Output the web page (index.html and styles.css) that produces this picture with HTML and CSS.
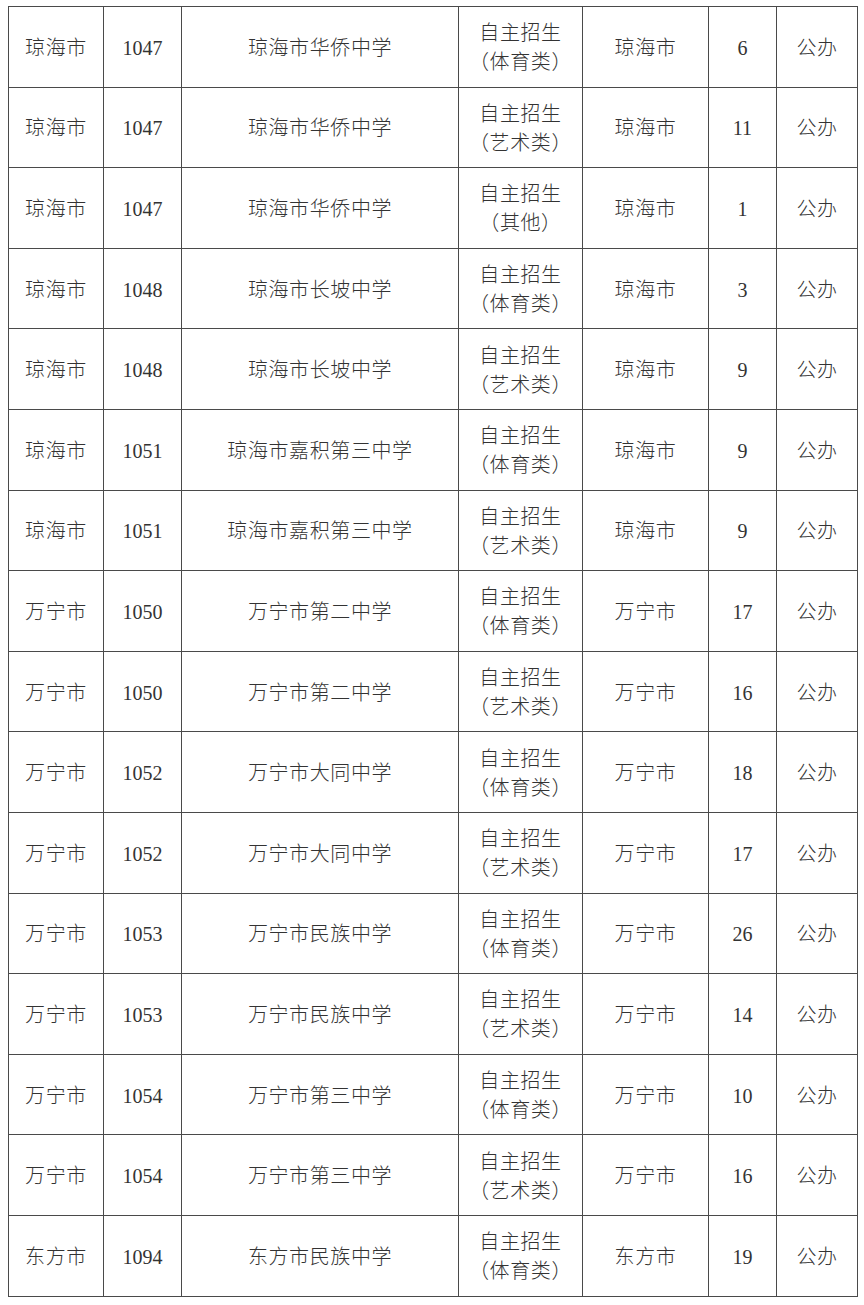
FILE: index.html
```html
<!DOCTYPE html>
<html lang="zh">
<head>
<meta charset="utf-8">
<link rel="stylesheet" href="styles.css">
</head>
<body>
<table class="tbl">
<colgroup>
<col class="c1"><col class="c2"><col class="c3"><col class="c4"><col class="c5"><col class="c6"><col class="c7">
</colgroup>
<tbody>
<tr><td>琼海市</td><td class="n">1047</td><td>琼海市华侨中学</td><td>自主招生<br>（体育类）</td><td>琼海市</td><td class="n">6</td><td>公办</td></tr>
<tr><td>琼海市</td><td class="n">1047</td><td>琼海市华侨中学</td><td>自主招生<br>（艺术类）</td><td>琼海市</td><td class="n">11</td><td>公办</td></tr>
<tr><td>琼海市</td><td class="n">1047</td><td>琼海市华侨中学</td><td>自主招生<br>（其他）</td><td>琼海市</td><td class="n">1</td><td>公办</td></tr>
<tr><td>琼海市</td><td class="n">1048</td><td>琼海市长坡中学</td><td>自主招生<br>（体育类）</td><td>琼海市</td><td class="n">3</td><td>公办</td></tr>
<tr><td>琼海市</td><td class="n">1048</td><td>琼海市长坡中学</td><td>自主招生<br>（艺术类）</td><td>琼海市</td><td class="n">9</td><td>公办</td></tr>
<tr><td>琼海市</td><td class="n">1051</td><td>琼海市嘉积第三中学</td><td>自主招生<br>（体育类）</td><td>琼海市</td><td class="n">9</td><td>公办</td></tr>
<tr><td>琼海市</td><td class="n">1051</td><td>琼海市嘉积第三中学</td><td>自主招生<br>（艺术类）</td><td>琼海市</td><td class="n">9</td><td>公办</td></tr>
<tr><td>万宁市</td><td class="n">1050</td><td>万宁市第二中学</td><td>自主招生<br>（体育类）</td><td>万宁市</td><td class="n">17</td><td>公办</td></tr>
<tr><td>万宁市</td><td class="n">1050</td><td>万宁市第二中学</td><td>自主招生<br>（艺术类）</td><td>万宁市</td><td class="n">16</td><td>公办</td></tr>
<tr><td>万宁市</td><td class="n">1052</td><td>万宁市大同中学</td><td>自主招生<br>（体育类）</td><td>万宁市</td><td class="n">18</td><td>公办</td></tr>
<tr><td>万宁市</td><td class="n">1052</td><td>万宁市大同中学</td><td>自主招生<br>（艺术类）</td><td>万宁市</td><td class="n">17</td><td>公办</td></tr>
<tr><td>万宁市</td><td class="n">1053</td><td>万宁市民族中学</td><td>自主招生<br>（体育类）</td><td>万宁市</td><td class="n">26</td><td>公办</td></tr>
<tr><td>万宁市</td><td class="n">1053</td><td>万宁市民族中学</td><td>自主招生<br>（艺术类）</td><td>万宁市</td><td class="n">14</td><td>公办</td></tr>
<tr><td>万宁市</td><td class="n">1054</td><td>万宁市第三中学</td><td>自主招生<br>（体育类）</td><td>万宁市</td><td class="n">10</td><td>公办</td></tr>
<tr><td>万宁市</td><td class="n">1054</td><td>万宁市第三中学</td><td>自主招生<br>（艺术类）</td><td>万宁市</td><td class="n">16</td><td>公办</td></tr>
<tr><td>东方市</td><td class="n">1094</td><td>东方市民族中学</td><td>自主招生<br>（体育类）</td><td>东方市</td><td class="n">19</td><td>公办</td></tr>
</tbody>
</table>
</body>
</html>
```
FILE: styles.css
```css
html, body {
  margin: 0;
  padding: 0;
  background: #ffffff;
}
body {
  padding: 6px 0 0 8px;
  font-family: "Liberation Serif", "Noto Sans CJK SC", serif;
  color: #333333;
}
.tbl {
  border-collapse: collapse;
  table-layout: fixed;
  width: 849px;
}
.c1 { width: 95px; }
.c2 { width: 78px; }
.c3 { width: 277px; }
.c4 { width: 124px; }
.c5 { width: 126px; }
.c6 { width: 68px; }
.c7 { width: 81px; }
.tbl tr {
  height: 80.6px;
}
.tbl td {
  border: 1.5px solid #4a4a4a;
  text-align: center;
  vertical-align: middle;
  padding: 3px 0 0 0;
  font-size: 20px;
  line-height: 29px;
  font-weight: 300;
  letter-spacing: 0.6px;
}
.tbl td.n {
  letter-spacing: 0;
}
```
